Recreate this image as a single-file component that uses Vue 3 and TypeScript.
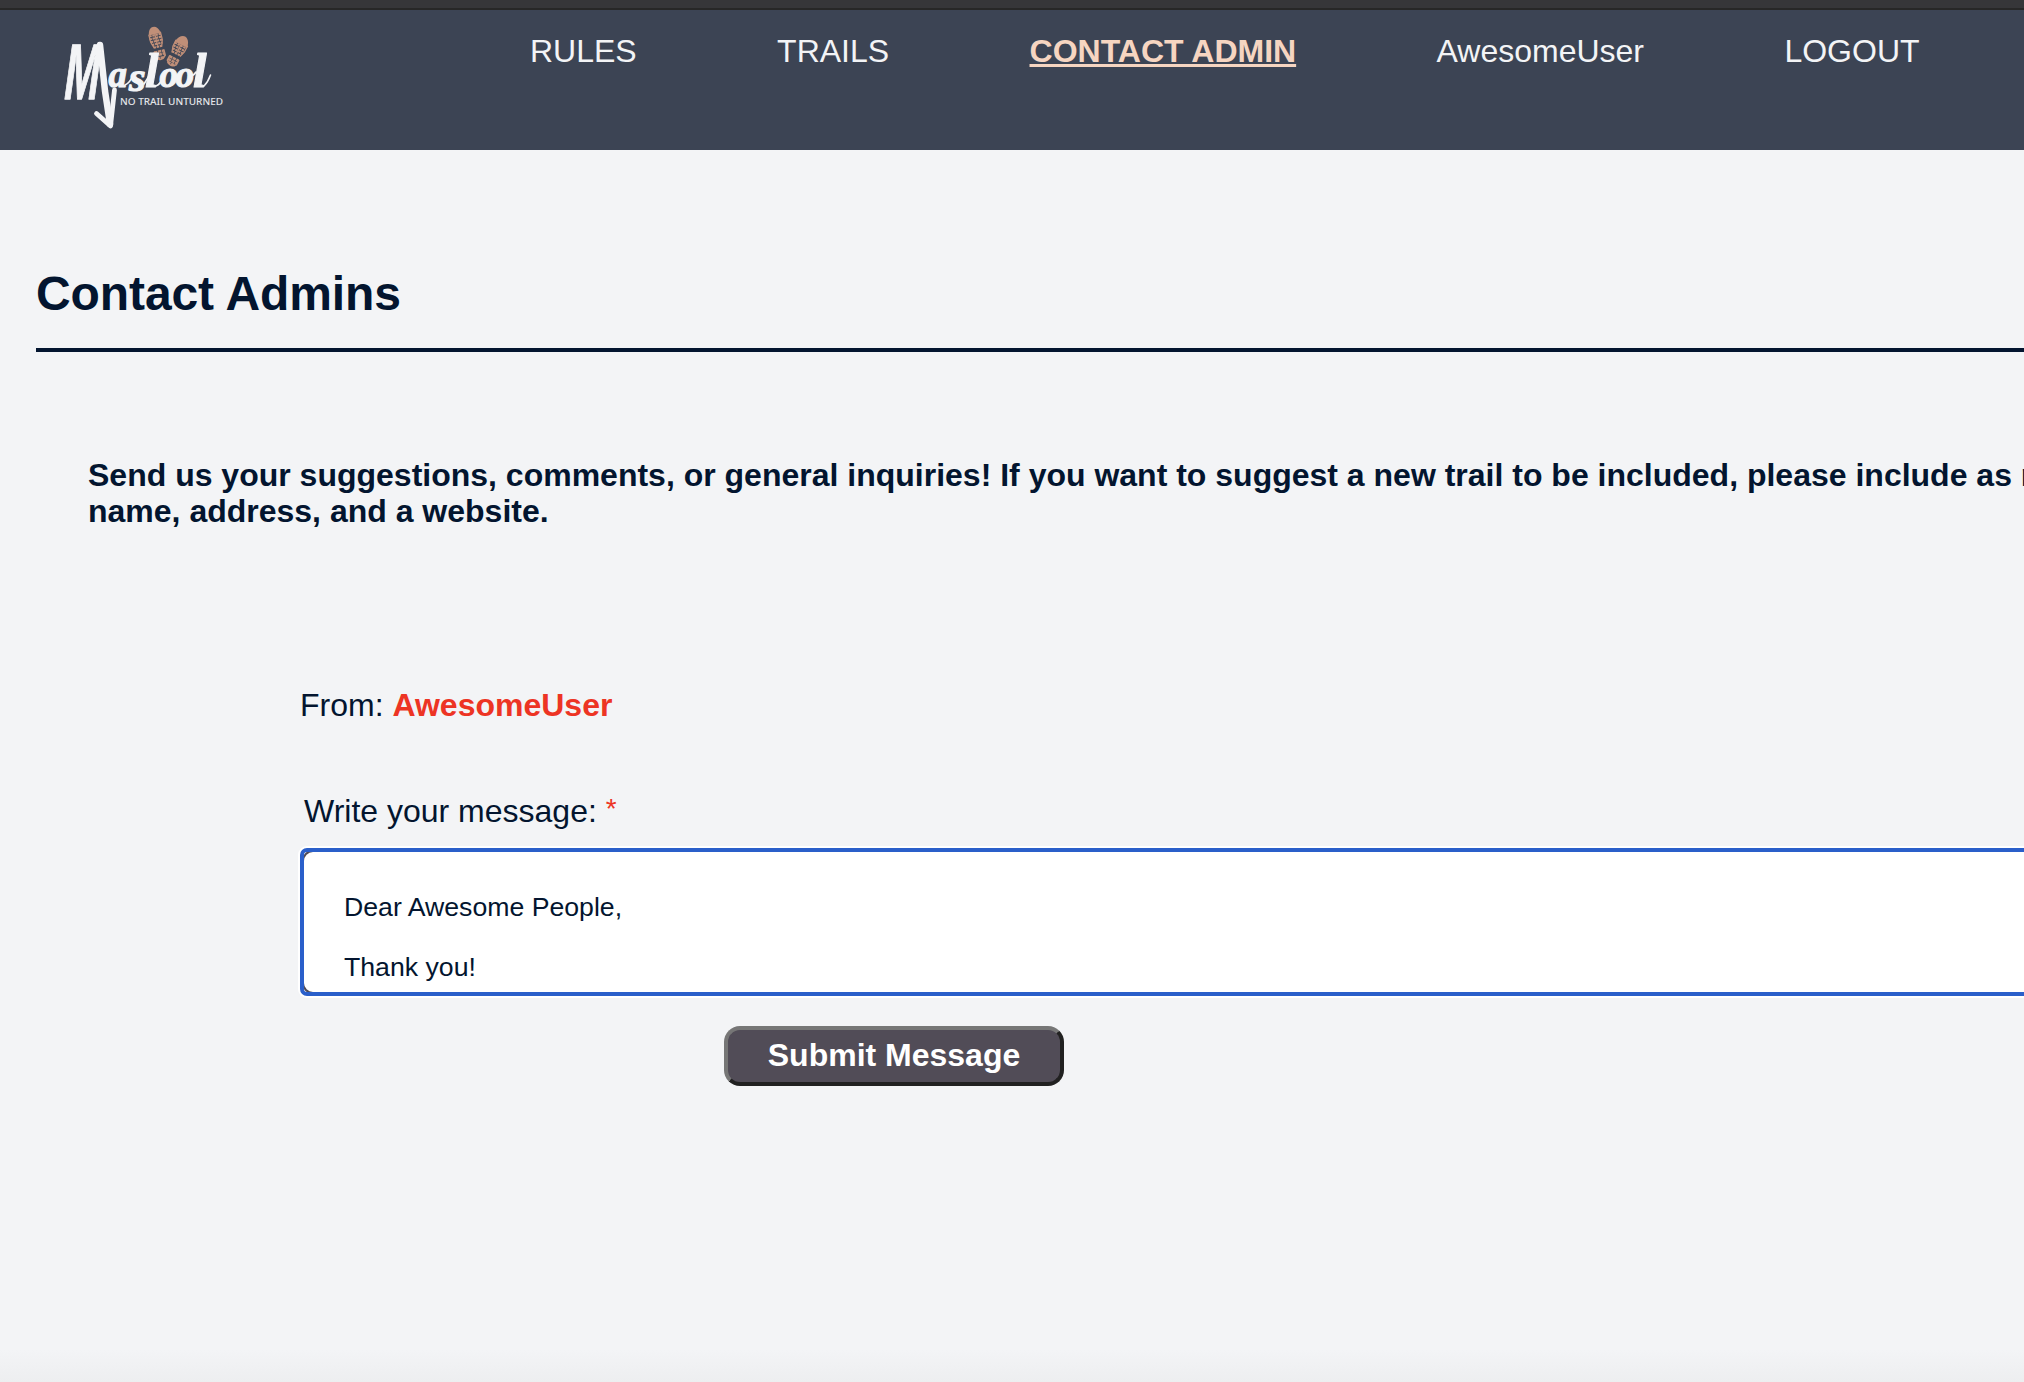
<script setup lang="ts">
import { ref } from 'vue'

interface NavLink {
  label: string
  active?: boolean
}

const user = 'AwesomeUser'
const links: NavLink[] = [
  { label: 'RULES' },
  { label: 'TRAILS' },
  { label: 'CONTACT ADMIN', active: true },
  { label: user },
  { label: 'LOGOUT' },
]
const message = ref('Dear Awesome People,\n\nThank you!')
</script>

<template>
  <div class="page">
    <div class="window-edge"></div>
    <header class="header">
      <svg class="logo" viewBox="60 20 170 115" width="170" height="115">
        <!-- boot prints -->
        <g fill="none" stroke="#c08f78">
          <g transform="translate(155.500 37) rotate(-14)">
            <path d="M-6-3C-5-13 5-13 6-3" fill="#c08f78" stroke="none" />
            <path d="M-6-2H6M-6.500 1H6.500M-6 4H6M-5.500 7H5.500M-4.500 10H4.500" stroke-width="2.100" stroke-dasharray="2.500 .7" />
            <path d="M-6-4V4L-4 10M6-4V4L4 10M0-4V9" stroke-width="1.200" />
            <path d="M-5 15H5M-5 18H5M-4 21.500H4" stroke-width="2.500" stroke-dasharray="3.200 .7" />
            <path d="M-5 14V20Q0 26 5 20V14" stroke-width="1.600" />
          </g>
          <g transform="translate(180.500 45.500) rotate(27)">
            <path d="M-7-1C-5-13 5-13 7-1" fill="#c08f78" stroke="none" />
            <path d="M-6.500 0H6.500M-6.500 3H6.500M-6 6H6M-5 9H5" stroke-width="2.100" stroke-dasharray="2.500 .7" />
            <path d="M-6.500-3V4L-4.500 10M6.500-3V4L4.500 10M0-4V9" stroke-width="1.200" />
            <path d="M-5 14.500H5M-5 17.500H5M-4 20.500H4" stroke-width="2.500" stroke-dasharray="3.200 .7" />
            <path d="M-5 13.500V19Q0 25 5 19V13.500" stroke-width="1.600" />
          </g>
        </g>
        <g fill="#f3f4f6" stroke="#f3f4f6" stroke-linejoin="round">
          <text class="initial" transform="translate(62 99) skewX(-8) scale(.68 1.270)">M</text>
          <text class="word" y="87">
            <tspan x="108.500">a</tspan><tspan class="long" x="129" y="91">s</tspan><tspan class="tall" x="145" y="87">l</tspan><tspan x="159.500">o</tspan><tspan x="175.500">o</tspan><tspan class="tall" x="193" y="87">l</tspan>
          </text>
          <text class="tagline" x="120" y="105" textLength="103" lengthAdjust="spacingAndGlyphs">NO TRAIL UNTURNED</text>
        </g>
        <!-- trail arrow -->
        <g fill="none" stroke="#f3f4f6" stroke-linecap="round" stroke-linejoin="round">
          <path d="M100 45L105 91L110 124" stroke-width="6.500" />
          <path d="M96.500 113.500L110.500 126L114.500 90" stroke-width="4.800" />
          <path d="M125 85Q130 83 133 75M144 84L149 76M156 86Q161 84 162 78M174 75Q179 77 181 73M189 75Q193 77 196 72M204 86Q208 82 210.500 75" stroke-width="1.600" />
        </g>
      </svg>
      <nav class="nav">
        <a v-for="link in links" :key="link.label" :class="{ active: link.active }">{{ link.label }}</a>
      </nav>
    </header>

    <main class="content">
      <h1 class="title">Contact Admins</h1>
      <p class="intro">
        Send us your suggestions, comments, or general inquiries! If you want to suggest a new trail to be included, please include as much<br />
        name, address, and a website.
      </p>
      <form class="form" @submit.prevent>
        <p class="from">From: <strong>{{ user }}</strong></p>
        <label class="label" for="message">Write your message: <span class="required star">*</span></label>
        <div class="field">
          <textarea id="message" v-model="message" class="message" spellcheck="false"></textarea>
        </div>
        <button class="submit" type="submit">Submit Message</button>
      </form>
    </main>
  </div>
</template>

<style>
body {
  background: #f3f4f6;
}
</style>

<style scoped>
.page {
  display: flex;
  flex-direction: column;
  width: 100%;
  height: 1382px;
  overflow: hidden;
  background: linear-gradient(#f3f4f6 0 1350px, #edeef0 1382px);
  color: #03152f;
  font: 32px/36px "Liberation Sans", Arial, sans-serif;
}
.window-edge {
  flex: none;
  height: 8px;
  background: #363639;
  border-bottom: 2px solid #272727;
}
.header {
  display: flex;
  flex: none;
  align-items: flex-start;
  height: 140px;
  background: #3c4454;
}
.logo {
  flex: none;
  margin: 10px 0 0 60px;
}
.initial {
  font: bold 62px "Liberation Sans", Arial, sans-serif;
  stroke-width: 1;
}
.word {
  font: italic bold 37px "Liberation Serif", serif;
  stroke-width: 1.1;
}
.long {
  font-size: 43px;
}
.tall {
  font-size: 49px;
}
.tagline {
  font: 500 9.2px "Noto Sans", sans-serif;
  fill: #e3e5e9;
  stroke: none;
}
.nav {
  display: flex;
  gap: 140.4px;
  margin: 23px 0 0 300px;
  color: #f3f4f6;
  white-space: nowrap;
}
.active {
  color: #f6d5c1;
  font-weight: bold;
  text-decoration: underline;
}
.content {
  padding: 116px 0 0 36px;
}
.title {
  margin: 0;
  padding-bottom: 26px;
  border-bottom: 4px solid #03152f;
  font-size: 48px;
  line-height: 56px;
  letter-spacing: -0.1px;
}
.intro {
  margin: 105px 0 0 52px;
  font-weight: bold;
  white-space: nowrap;
}
.form {
  display: flex;
  flex-direction: column;
  align-items: flex-start;
  margin: 158px 0 0 264px;
}
.from {
  margin: 0;
}
.from strong,
.required {
  color: #ed3424;
}
.star {
  font-size: 28px;
  line-height: 1;
  position: relative;
  top: -4px;
}
.label {
  margin: 70px 0 19px 4px;
}
.field {
  box-sizing: border-box;
  width: 1900px;
  height: 148px;
  overflow: hidden;
  border: 4px solid #2a5fca;
  border-radius: 7px;
  background: #fff;
  box-shadow: 0 0 0 2px #fff;
}
.message {
  display: block;
  box-sizing: border-box;
  width: 1896px;
  height: 144px;
  margin: -2px;
  padding: 40px;
  overflow: hidden;
  border: 2px solid #514c57;
  border-radius: 11px;
  outline: none;
  background: #fff;
  color: inherit;
  font: 26.667px/30px "Liberation Sans", Arial, sans-serif;
  resize: none;
}
.submit {
  box-sizing: border-box;
  width: 340px;
  height: 60px;
  margin: 30px 0 0 424px;
  padding: 0 0 3px;
  border: 4px solid;
  border-color: #767676 #212121 #212121 #767676;
  border-radius: 16px;
  background: #514c57;
  color: #fff;
  font: bold 32px/36px "Liberation Sans", Arial, sans-serif;
}
</style>
